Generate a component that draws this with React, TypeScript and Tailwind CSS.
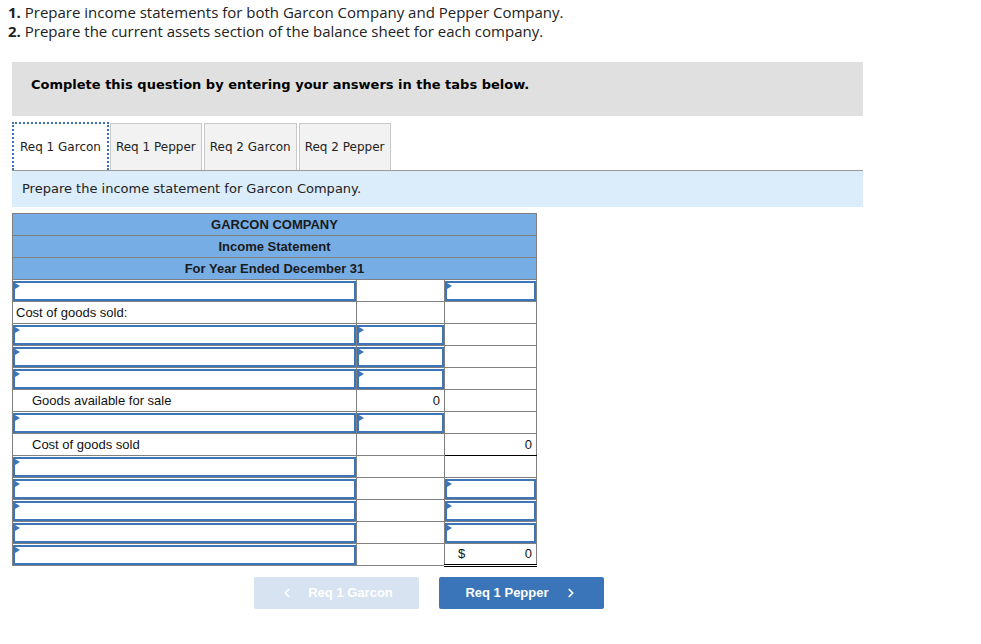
import React from 'react';
import { ChevronLeft, ChevronRight } from 'lucide-react';

type Cell =
  | { kind: 'input' }
  | { kind: 'empty'; cls?: string }
  | { kind: 'text'; text: string; indent?: boolean; right?: boolean; cls?: string; dollar?: boolean };

const I: Cell = { kind: 'input' };
const E: Cell = { kind: 'empty' };

const rows: Cell[][] = [
  [I, E, I],
  [{ kind: 'text', text: 'Cost of goods sold:' }, E, E],
  [I, I, E],
  [I, I, E],
  [I, I, E],
  [
    { kind: 'text', text: 'Goods available for sale', indent: true },
    { kind: 'text', text: '0', right: true, cls: 'border-t-black' },
    E,
  ],
  [I, I, E],
  [
    { kind: 'text', text: 'Cost of goods sold', indent: true },
    { kind: 'empty', cls: 'border-t-black' },
    { kind: 'text', text: '0', right: true, cls: 'border-b-black' },
  ],
  [I, E, E],
  [I, E, I],
  [I, E, I],
  [I, E, I],
  [
    I,
    E,
    {
      kind: 'text',
      text: '0',
      right: true,
      dollar: true,
      cls: 'border-t-black border-b-[3px] border-b-black [border-bottom-style:double]',
    },
  ],
];

const InputBox = () => (
  <div className="relative h-[20px] border-2 border-[#3d75ba] bg-white">
    <span className="absolute left-0 top-0 w-0 h-0 border-y-[3px] border-y-transparent border-l-[5px] border-l-[#3d75ba]" />
  </div>
);

const tabs = ['Req 1 Garcon', 'Req 1 Pepper', 'Req 2 Garcon', 'Req 2 Pepper'];

export default function App() {
  return (
    <div className="w-[981px] h-[644px] bg-white text-[#222]">
      {/* Instructions */}
      <div className="pl-[8px] pt-[3px] text-[15px] leading-[19px]" style={{ fontFamily: '"Open Sans", sans-serif' }}>
        <p><span className="font-bold">1.</span> Prepare income statements for both Garcon Company and Pepper Company.</p>
        <p><span className="font-bold">2.</span> Prepare the current assets section of the balance sheet for each company.</p>
      </div>

      <div className="px-3 mt-[21px] w-[875px]">
        <div className="h-[54px] bg-[#e0e0e0] pt-[13px] pl-[19px] text-[13px] font-bold text-black" style={{ fontFamily: '"DejaVu Sans", Verdana, sans-serif' }}>
          Complete this question by entering your answers in the tabs below.
        </div>

        {/* Tabs */}
        <div className="mt-[6px] flex items-end gap-[2px] border-b border-[#999]" style={{ fontFamily: '"DejaVu Sans", Verdana, sans-serif' }}>
          {tabs.map((t, i) => (
            <div
              key={t}
              className={
                i === 0
                  ? 'h-[48px] px-[6px] mr-[-1px] flex items-center text-[12px] bg-white border-2 border-dotted border-[#3b6fb6] border-b-0'
                  : 'h-[47px] px-[5px] flex items-center text-[12px] bg-[#f2f2f2] border border-[#c8c8c8] border-b-0'
              }
            >
              {t}
            </div>
          ))}
        </div>
        <div className="h-[36px] bg-[#dbecfa] flex items-center pl-[10px] text-[13px]" style={{ fontFamily: '"DejaVu Sans", Verdana, sans-serif' }}>
          Prepare the income statement for Garcon Company.
        </div>

        {/* Statement */}
        <table className="mt-[6px] border-collapse w-[524px] table-fixed text-[13px] text-[#111]" style={{ fontFamily: '"Liberation Sans", Arial, sans-serif' }}>
          <colgroup>
            <col className="w-[344px]" />
            <col className="w-[88px]" />
            <col className="w-[92px]" />
          </colgroup>
          <thead>
            {['GARCON COMPANY', 'Income Statement', 'For Year Ended December 31'].map((h) => (
              <tr key={h}>
                <th colSpan={3} className="h-[22px] p-0 bg-[#77ade5] border border-[#808080] text-[13px] font-bold text-center text-[#1a1a1a]">
                  {h}
                </th>
              </tr>
            ))}
          </thead>
          <tbody>
            {rows.map((r, ri) => (
              <tr key={ri}>
                {r.map((c, ci) => {
                  if (c.kind === 'input') {
                    return (
                      <td key={ci} className="h-[22px] p-0 border border-[#808080]">
                        <InputBox />
                      </td>
                    );
                  }
                  if (c.kind === 'empty') {
                    return <td key={ci} className={`h-[22px] p-0 border border-[#808080] ${c.cls ?? ''}`} />;
                  }
                  return (
                    <td
                      key={ci}
                      className={`h-[22px] py-0 border border-[#808080] ${c.indent ? 'pl-[19px]' : 'pl-[3px]'} ${c.right ? 'text-right pr-[4px]' : ''} ${c.cls ?? ''}`}
                    >
                      {c.dollar ? (
                        <div className="flex justify-between pl-[10px]">
                          <span>$</span>
                          <span>{c.text}</span>
                        </div>
                      ) : (
                        c.text
                      )}
                    </td>
                  );
                })}
              </tr>
            ))}
          </tbody>
        </table>

        {/* Navigation */}
        <div className="mt-[10px] ml-[242px] flex gap-[20px] text-[13px] font-bold text-white" style={{ fontFamily: '"Liberation Sans", Arial, sans-serif' }}>
          <button className="w-[165px] h-[32px] rounded-[2px] bg-[#d7e3f1] flex items-center justify-center gap-[14px]">
            <ChevronLeft size={14} strokeWidth={3} />
            <span>Req 1 Garcon</span>
          </button>
          <button className="w-[165px] h-[32px] rounded-[2px] bg-[#3a75ba] flex items-center justify-center gap-[15px]">
            <span>Req 1 Pepper</span>
            <ChevronRight size={14} strokeWidth={3} />
          </button>
        </div>
      </div>
    </div>
  );
}
